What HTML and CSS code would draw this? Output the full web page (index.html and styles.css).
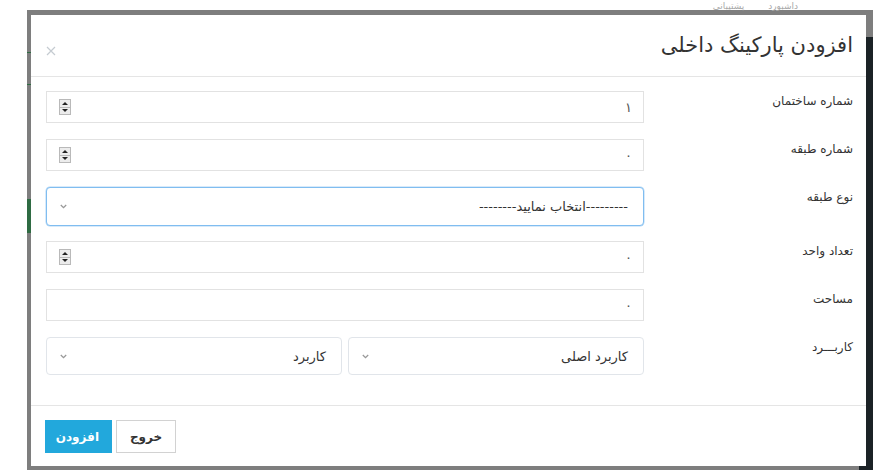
FILE: index.html
```html
<!DOCTYPE html>
<html lang="fa">
<head>
<meta charset="utf-8">
<title>افزودن پارکینگ داخلی</title>
<link rel="stylesheet" href="styles.css">
</head>
<body>
<div class="page">
  <div class="backdrop">
    <div class="bg-side"></div>
    <div class="bg-mark mark-a"></div>
    <div class="bg-mark mark-b"></div>
    <div class="bg-mark mark-c"></div>
  </div>
  <div class="bg-nav"><span>داشبورد</span><span>پشتیبانی</span></div>

  <div class="modal" dir="rtl">
    <div class="modal-header">
      <h4 class="modal-title">افزودن پارکینگ داخلی</h4>
      <button class="close" type="button" aria-label="close">
        <svg width="10" height="10" viewBox="0 0 10 10"><path d="M1 1L9 9M9 1L1 9" stroke="#c5cbd1" stroke-width="1.2" fill="none"/></svg>
      </button>
    </div>

    <form class="modal-body">
      <div class="form-row">
        <label class="lbl">شماره ساختمان</label>
        <div class="field">
          <span class="val">۱</span>
          <span class="spin"><span class="up"></span><span class="down"></span></span>
        </div>
      </div>
      <div class="form-row">
        <label class="lbl">شماره طبقه</label>
        <div class="field">
          <span class="val">۰</span>
          <span class="spin"><span class="up"></span><span class="down"></span></span>
        </div>
      </div>
      <div class="form-row select-row">
        <label class="lbl">نوع طبقه</label>
        <div class="select focused">
          <span class="sel-text">---------انتخاب نمایید--------</span>
          <svg class="chev" width="7" height="5" viewBox="0 0 7 5"><path d="M0.8 1L3.5 3.7L6.2 1" stroke="#999" stroke-width="1.3" fill="none"/></svg>
        </div>
      </div>
      <div class="form-row">
        <label class="lbl">تعداد واحد</label>
        <div class="field">
          <span class="val">۰</span>
          <span class="spin"><span class="up"></span><span class="down"></span></span>
        </div>
      </div>
      <div class="form-row">
        <label class="lbl">مساحت</label>
        <div class="field">
          <span class="val">۰</span>
        </div>
      </div>
      <div class="form-row select-row">
        <label class="lbl">کاربـــرد</label>
        <div class="split">
          <div class="select">
            <span class="sel-text">کاربرد اصلی</span>
            <svg class="chev" width="7" height="5" viewBox="0 0 7 5"><path d="M0.8 1L3.5 3.7L6.2 1" stroke="#999" stroke-width="1.3" fill="none"/></svg>
          </div>
          <div class="select">
            <span class="sel-text">کاربرد</span>
            <svg class="chev" width="7" height="5" viewBox="0 0 7 5"><path d="M0.8 1L3.5 3.7L6.2 1" stroke="#999" stroke-width="1.3" fill="none"/></svg>
          </div>
        </div>
      </div>
    </form>

    <div class="modal-footer">
      <button class="btn btn-default" type="button">خروج</button>
      <button class="btn btn-primary" type="button">افزودن</button>
    </div>
  </div>
</div>
</body>
</html>
```

FILE: styles.css
```css
* { box-sizing: border-box; }

html, body {
  margin: 0;
  padding: 0;
  background: #ffffff;
  overflow: hidden;
}

body {
  font-family: "DejaVu Sans", "Noto Sans", sans-serif;
  color: #333;
}

.page {
  position: relative;
  width: 883px;
  height: 470px;
}

.backdrop {
  position: absolute;
  left: 27px;
  top: 10px;
  width: 846px;
  height: 460px;
  background: #7e7e7e;
  overflow: hidden;
}

.bg-nav {
  position: absolute;
  top: 1px;
  right: 85px;
  display: flex;
  gap: 24px;
  direction: rtl;
  font-size: 9px;
  line-height: 11px;
  color: #a9a9a9;
}

.bg-side {
  position: absolute;
  left: 832px;
  top: 27px;
  width: 14px;
  bottom: 0;
  background: #1b2226;
}

.bg-mark {
  position: absolute;
  left: 0;
  width: 4px;
  background: #2f6b43;
}
.mark-a { top: 42px; height: 1px; }
.mark-b { top: 74px; height: 1px; }
.mark-c { top: 189px; height: 34px; }

.modal {
  position: absolute;
  left: 31px;
  top: 15px;
  width: 835px;
  height: 451px;
  background: #fff;
  display: flex;
  flex-direction: column;
  direction: rtl;
}

.modal-header {
  display: flex;
  justify-content: space-between;
  align-items: flex-start;
  padding: 15px 13px 15px 15px;
  border-bottom: 1px solid #e5e5e5;
}

.modal-title {
  margin: 0;
  font-size: 21px;
  font-weight: normal;
  line-height: 31px;
  color: #333;
}

.close {
  border: 0;
  background: none;
  padding: 0;
  width: 10px;
  height: 10px;
  display: block;
  margin-top: 16px;
}
.close svg { display: block; }

.modal-body {
  margin: 0;
  padding: 14px 13px 14px 15px;
  flex: 1;
}

.form-row {
  display: grid;
  grid-template-columns: 1fr 598px;
  margin-bottom: 16px;
  height: 32px;
}
.select-row { height: 38px; }

.lbl {
  font-size: 12px;
  line-height: 17px;
  padding-top: 2px;
  color: #333;
}

.field {
  display: flex;
  align-items: center;
  height: 32px;
  border: 1px solid #e2e2e2;
  padding: 0 11px 0 12px;
  font-size: 13px;
  color: #555;
}

.val { flex: none; }

.spin {
  margin-right: auto;
  width: 12px;
  height: 16px;
  border: 1px solid #b9b9b9;
  background: #ececec;
  display: flex;
  flex-direction: column;
}
.spin .up, .spin .down {
  flex: 1;
  display: flex;
  align-items: center;
  justify-content: center;
}
.spin .up { border-bottom: 1px solid #b9b9b9; }
.spin .up::before {
  content: "";
  border-left: 3px solid transparent;
  border-right: 3px solid transparent;
  border-bottom: 3px solid #222;
}
.spin .down::before {
  content: "";
  border-left: 3px solid transparent;
  border-right: 3px solid transparent;
  border-top: 3px solid #222;
}

.select {
  display: flex;
  align-items: center;
  height: 38px;
  border: 1px solid #e1e5ea;
  border-radius: 4px;
  padding: 0 15px 0 13px;
  font-size: 13px;
  color: #333;
  background: #fff;
}
.select.focused {
  height: 39px;
  border-color: #80bdf0;
  box-shadow: 0 0 0 0.5px rgba(128, 189, 240, 0.6);
}
.select .chev {
  margin-right: auto;
  display: block;
}

.split {
  display: grid;
  grid-template-columns: 1fr 1fr;
  gap: 6px;
}

.modal-footer {
  display: flex;
  justify-content: flex-end;
  gap: 4px;
  padding: 14px 15px 13px 14px;
  border-top: 1px solid #e5e5e5;
}

.btn {
  height: 33px;
  font-family: "DejaVu Sans", sans-serif;
  font-size: 12px;
  font-weight: bold;
  padding: 0 12px;
  border-radius: 0;
  cursor: pointer;
}
.btn-default {
  width: 60px;
  background: #fff;
  color: #333;
  border: 1px solid #d2d2d2;
}
.btn-primary {
  width: 67px;
  background: #22a8dc;
  color: #fff;
  border: 1px solid #22a8dc;
}
```
